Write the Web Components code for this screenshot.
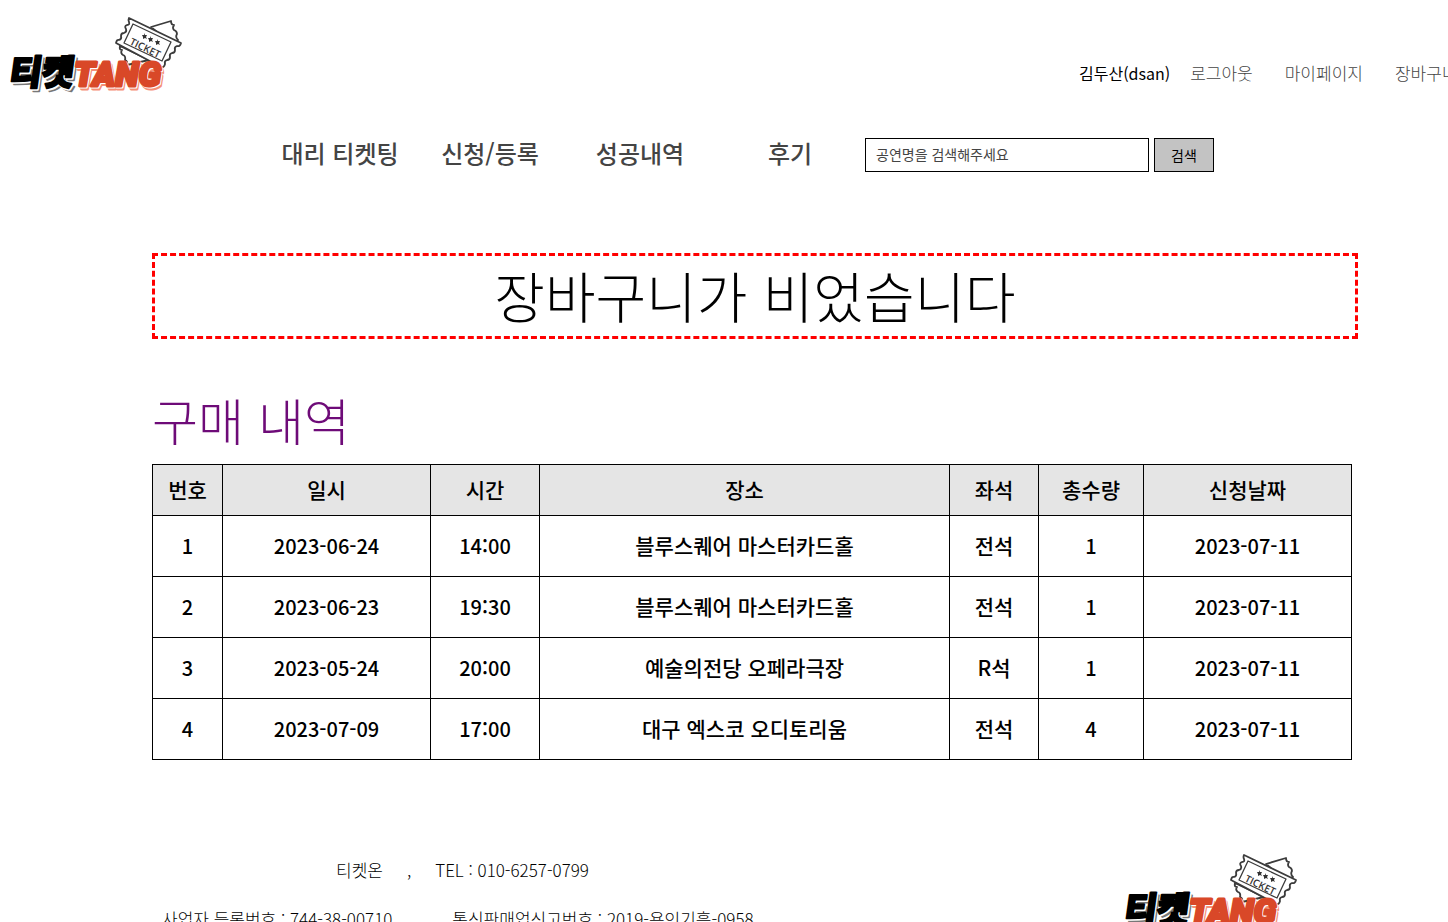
<!DOCTYPE html>
<html lang="ko">
<head>
<meta charset="utf-8">
<meta name="viewport" content="width=device-width, initial-scale=1">
<title>티켓TANG</title>
<style>
  body {
    margin: 0;
    background: #fff;
    color: #000;
    font-family: "Noto Sans CJK KR", sans-serif;
    font-size: 16px;
    line-height: 24px;
    overflow-x: hidden;
  }
</style>
</head>
<body>
<ticket-page></ticket-page>

<template id="ticket-page">
  <style>
    :host { display: block; }
    main { padding: 81px 90px 0 152px; }
  </style>
  <site-header></site-header>
  <main>
    <empty-notice>장바구니가 비었습니다</empty-notice>
    <order-history><span slot="title">구매 내역</span></order-history>
  </main>
  <site-footer></site-footer>
</template>

<template id="site-logo">
  <style>
    :host { display: block; width: 192px; height: 104px; }
    svg { display: block; }
    .ko { font: 900 35px "Noto Sans CJK KR", sans-serif; }
    .en { font: italic 900 34px Roboto, sans-serif; }
    .small { font: 600 10px "Open Sans", sans-serif; }
  </style>
  <svg width="192" height="104" viewBox="0 0 192 104" role="img" aria-label="티켓TANG">
    <g fill="#fff" stroke="#3c3c3c" stroke-width="1.8" stroke-linejoin="round">
      <path d="M151 27l20-6q0 4 3 4q-2 3 0 5q3 1 3 4q-2 3 1 6l-4 6zM120 46q-1 4 2 4q-2 3 1 5q3 1 2 5q3 1 2 5l22-5z"/>
      <path d="M129 18L181 43q-1 4-4 3q-3 1-2 4q0 3-3 3q-3 1-2 4q0 3-3 3q-3 1-2 4q-1 4-4 3L116 43q1-4 3-3q3-1 2-4q0-3 3-3q3-1 2-4q-2-3 1-4q3 0 2-3q-1-2 0-4z"/>
      <path d="M133 24l38 18l-9 19l-38-18z" stroke-width="1.3"/>
    </g>
    <g fill="#333">
      <path d="M144 33l1 2l2 0l-1 2l1 2l-2-1l-2 1l0-2l-1-2l2 0zM150 36l1 2l2 0l-1 2l1 2l-2-1l-2 1l0-2l-1-2l2 0zM157 39l1 2l2 0l-1 2l1 2l-2-1l-2 1l0-2l-1-2l2 0z"/>
      <text class="small" transform="translate(129 44) rotate(26)">TICKET</text>
    </g>
    <g stroke-linejoin="round">
      <g transform="translate(15 86) skewX(-8)">
        <text class="ko" x="-4" y="2" fill="#777" stroke="#777" stroke-width="2">티켓</text>
        <text class="ko" x="-6" y="0" fill="#fff" stroke="#fff" stroke-width="3">티켓</text>
        <text class="ko" x="-7" y="-1" fill="#000" stroke="#000" stroke-width="2">티켓</text>
      </g>
      <text class="en" x="76" y="89" fill="#f58f78" stroke="#f58f78" stroke-width="3">TANG</text>
      <text class="en" x="75" y="87" fill="#fff" stroke="#fff" stroke-width="3">TANG</text>
      <text class="en" x="74" y="86" fill="#d94828" stroke="#d94828" stroke-width="3">TANG</text>
    </g>
  </svg>
</template>

<template id="site-header">
  <style>
    :host { display: block; }
    .top { display: flex; justify-content: space-between; height: 138px; }
    .bar { display: flex; padding-left: 265px; align-items: flex-start; }
  </style>
  <header>
    <div class="top">
      <site-logo></site-logo>
      <user-menu>김두산(dsan)</user-menu>
    </div>
    <div class="bar">
      <main-nav></main-nav>
      <search-form></search-form>
    </div>
  </header>
</template>

<template id="user-menu">
  <style>
    :host { display: block; flex: 0 0 369px; overflow: hidden; padding-top: 61px; }
    div { display: flex; gap: 32px; white-space: nowrap; }
    .name { margin-right: -12px; }
    a { color: #444; font-size: 17px; font-weight: 300; text-decoration: none; }
  </style>
  <div>
    <span class="name"><slot></slot></span>
    <a href="#logout">로그아웃</a>
    <a href="#mypage">마이페이지</a>
    <a href="#cart">장바구니</a>
  </div>
</template>

<template id="main-nav">
  <style>
    :host { display: block; }
    nav { display: grid; grid-template-columns: repeat(4, 150px); text-align: center; }
    a { color: #444; font-size: 24px; font-weight: 500; line-height: 30px; text-decoration: none; white-space: nowrap; }
  </style>
  <nav>
    <a href="#proxy">대리 티켓팅</a>
    <a href="#apply">신청/등록</a>
    <a href="#success">성공내역</a>
    <a href="#reviews">후기</a>
  </nav>
</template>

<template id="search-form">
  <style>
    :host { display: block; }
    form { display: flex; gap: 5px; }
    input, button { box-sizing: border-box; height: 34px; margin: 0; border: 1px solid #000; border-radius: 0; font: inherit; font-size: 14px; }
    input { width: 284px; padding: 0 10px 2px; background: #fff; }
    input::placeholder { color: #444; opacity: 1; }
    button { width: 60px; padding: 0; background: #c3c3c3; color: #000; }
  </style>
  <form>
    <input type="search" aria-label="공연명 검색" placeholder="공연명을 검색해주세요">
    <button type="button">검색</button>
  </form>
</template>

<template id="empty-notice">
  <style>
    :host { display: block; padding-bottom: 4px; border: 3px dashed #f00; font-size: 55px; font-weight: 300; line-height: 76px; text-align: center; }
  </style>
  <slot></slot>
</template>

<template id="order-history">
  <style>
    :host { display: block; padding: 40px 6px 0 0; }
    h2 { margin: 0 0 5px; color: #6e0b78; font-size: 50px; font-weight: 300; line-height: 80px; }
    table { width: 100%; table-layout: fixed; border-collapse: collapse; text-align: center; font-size: 20px; font-weight: 500; }
    th, td { box-sizing: border-box; border: 1px solid #000; padding: 0; height: 61px; }
    th { height: 51px; padding-bottom: 3px; background: #e5e5e5; font-size: 21px; font-weight: 500; }
    td:nth-child(4), td:nth-child(5) { padding-bottom: 3px; font-size: 21px; }
  </style>
  <h2><slot name="title"></slot></h2>
  <table>
    <colgroup>
      <col style="width:70px"><col style="width:208px"><col style="width:109px"><col style="width:410px"><col style="width:89px"><col style="width:105px"><col style="width:208px">
    </colgroup>
    <thead>
      <tr><th>번호</th><th>일시</th><th>시간</th><th>장소</th><th>좌석</th><th>총수량</th><th>신청날짜</th></tr>
    </thead>
    <tbody>
      <tr><td>1</td><td>2023-06-24</td><td>14:00</td><td>블루스퀘어 마스터카드홀</td><td>전석</td><td>1</td><td>2023-07-11</td></tr>
      <tr><td>2</td><td>2023-06-23</td><td>19:30</td><td>블루스퀘어 마스터카드홀</td><td>전석</td><td>1</td><td>2023-07-11</td></tr>
      <tr><td>3</td><td>2023-05-24</td><td>20:00</td><td>예술의전당 오페라극장</td><td>R석</td><td>1</td><td>2023-07-11</td></tr>
      <tr><td>4</td><td>2023-07-09</td><td>17:00</td><td>대구 엑스코 오디토리움</td><td>전석</td><td>4</td><td>2023-07-11</td></tr>
    </tbody>
  </table>
</template>

<template id="site-footer">
  <style>
    :host { display: block; padding-top: 77px; }
    footer { display: flex; justify-content: space-between; padding: 0 141px 0 162px; }
    .info { padding-top: 21px; font-size: 17px; font-weight: 300; white-space: nowrap; }
    p { display: flex; margin: 0 0 25px; }
    .contact { padding-left: 174px; gap: 24px; }
    .licence { gap: 60px; }
  </style>
  <footer>
    <div class="info">
      <p class="contact"><span>티켓온</span><span>,</span><span>TEL : 010-6257-0799</span></p>
      <p class="licence"><span>사업자 등록번호 : 744-38-00710</span><span>통신판매업신고번호 : 2019-용인기흥-0958</span></p>
    </div>
    <site-logo></site-logo>
  </footer>
</template>

<script>
  for (const name of ["site-logo", "user-menu", "main-nav", "search-form", "empty-notice", "order-history", "site-header", "site-footer", "ticket-page"]) {
    customElements.define(name, class extends HTMLElement {
      constructor() {
        super();
        this.attachShadow({ mode: "open" }).append(document.getElementById(name).content.cloneNode(true));
      }
    });
  }
</script>
</body>
</html>
